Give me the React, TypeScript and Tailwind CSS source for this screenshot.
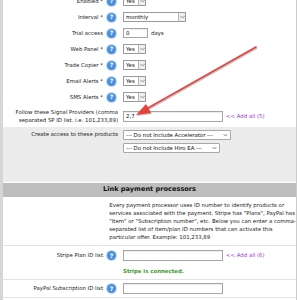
import React from "react";

const Help = () => (
  <span className="w-[9px] h-[9px] shrink-0 rounded-full bg-[#4a8fdc] ring-1 ring-[#c5dcf5] flex items-center justify-center text-white text-[6px] font-bold leading-none">
    ?
  </span>
);

const Chevron = ({ c = "#777" }: { c?: string }) => (
  <svg width="5" height="4" viewBox="0 0 5 4">
    <polyline points="0.5,1 2.5,3 4.5,1" fill="none" stroke={c} strokeWidth="0.8" />
  </svg>
);

const ClassicSelect = ({ value, w }: { value: string; w: string }) => (
  <div className={`h-[10px] ${w} border border-[#9a9a9a] bg-white flex items-stretch`}>
    <span className="flex-1 pl-[2px] leading-[8px] text-[5.4px] text-[#111]">{value}</span>
    <span className="w-[7px] border-l border-[#b8b8b8] bg-[#eeeeee] flex items-center justify-center">
      <Chevron />
    </span>
  </div>
);

const FlatSelect = ({ value, w }: { value: string; w: string }) => (
  <div className={`h-[10px] ${w} border border-[#a8a8a8] rounded-[1px] bg-white flex items-center justify-between px-[2px]`}>
    <span className="leading-[8px] text-[5.4px] text-[#111] whitespace-nowrap">{value}</span>
    <Chevron c="#666" />
  </div>
);

const Input = ({ value = "", w = "w-[100px]", h = "h-[11px]" }: { value?: string; w?: string; h?: string }) => (
  <div className={`${h} ${w} border border-[#a5a5a5] bg-white flex items-center px-[2px] text-[5.4px] text-[#111] shadow-[inset_0_1px_1px_rgba(0,0,0,0.08)]`}>
    {value}
  </div>
);

const Row = ({ label, children }: { label: string; children: React.ReactNode }) => (
  <div className="flex items-center h-[16px]">
    <div className="w-[120px] flex justify-end items-center gap-[4px] pr-[7px]">
      <span className="text-[5.4px] text-[#222] whitespace-nowrap">{label}</span>
      <Help />
    </div>
    <div className="flex items-center gap-[3px]">{children}</div>
  </div>
);

const AddAll = ({ n }: { n: number }) => (
  <span className="text-[5.4px] text-[#9a30d8] whitespace-nowrap">&lt;&lt; Add all ({n})</span>
);

export default function App() {
  return (
    <div className="w-[300px] h-[300px] overflow-hidden bg-white relative font-['DejaVu_Sans',sans-serif]">
      <div className="w-[297px] border-l-[3px] border-r border-l-[#d6d6d6] border-r-[#cccccc] -mt-[7px] h-[320px]">
        <Row label="Enabled *">
          <ClassicSelect value="Yes" w="w-[23px]" />
        </Row>
        <Row label="Interval *">
          <ClassicSelect value="monthly" w="w-[63px]" />
        </Row>
        <Row label="Trial access">
          <Input value="0" w="w-[25px]" h="h-[10px]" />
          <span className="text-[5.4px] text-[#222]">days</span>
        </Row>
        <Row label="Web Panel *">
          <ClassicSelect value="Yes" w="w-[23px]" />
        </Row>
        <Row label="Trade Copier *">
          <ClassicSelect value="Yes" w="w-[23px]" />
        </Row>
        <Row label="Email Alerts *">
          <ClassicSelect value="Yes" w="w-[23px]" />
        </Row>
        <Row label="SMS Alerts *">
          <ClassicSelect value="Yes" w="w-[23px]" />
        </Row>

        <div className="flex items-center h-[22px]">
          <div className="w-[120px] pr-[5px] text-right text-[5.4px] leading-[8px] text-[#222] whitespace-nowrap">
            Follow these Signal Providers (comma
            <br />
            separated SP ID list. i.e. 101,233,89)
          </div>
          <div className="flex items-center gap-[3px]">
            <Input value="2,7" />
            <AddAll n={5} />
          </div>
        </div>

        <div className="flex h-[55px] bg-[#ececec]">
          <div className="w-[120px] pr-[5px] pt-[3px] text-right text-[5.4px] leading-[8px] text-[#222] whitespace-nowrap">
            Create access to these products
          </div>
          <div className="flex flex-col gap-[3px] pt-[3px]">
            <FlatSelect value="--- Do not Include Accelerator ---" w="w-[108px]" />
            <FlatSelect value="--- Do not Include Hiro EA ---" w="w-[97px]" />
          </div>
        </div>

        <div className="mt-[1px] h-[14px] bg-[#bdbdbd] flex items-center justify-center">
          <span className="text-[6.6px] font-bold text-[#111]">Link payment processors</span>
        </div>

        <div className="flex border-b border-[#e3e3e3] pt-[4px] pb-[4px]">
          <div className="w-[120px]" />
          <div className="text-[5.4px] leading-[8px] text-[#222] whitespace-nowrap">
            Every payment processor uses ID number to identify products or
            <br />
            services associated with the payment. Stripe has "Plans", PayPal has
            <br />
            "Item" or "Subscription number", etc. Below you can enter a comma-
            <br />
            separated list of item/plan ID numbers that can activate this
            <br />
            particular offer. Example: 101,233,89
          </div>
        </div>

        <div className="flex border-b border-[#e3e3e3] pt-[4px] pb-[4px]">
          <div className="w-[120px] h-[11px] flex justify-end items-center gap-[4px] pr-[7px]">
            <span className="text-[5.4px] text-[#222] whitespace-nowrap">Stripe Plan ID list</span>
            <Help />
          </div>
          <div className="flex flex-col gap-[6px]">
            <div className="flex items-center gap-[3px]">
              <Input />
              <AddAll n={6} />
            </div>
            <span className="text-[5.4px] leading-[8px] font-bold text-[#3b9b27]">Stripe is connected.</span>
          </div>
        </div>

        <div className="flex border-b border-[#e3e3e3] pt-[3px] pb-[3px]">
          <div className="w-[120px] h-[11px] flex justify-end items-center gap-[4px] pr-[7px]">
            <span className="text-[5.4px] text-[#222] whitespace-nowrap">PayPal Subscription ID list</span>
            <Help />
          </div>
          <Input />
        </div>
      </div>

      <svg className="absolute left-0 top-0 pointer-events-none" width="300" height="300" viewBox="0 0 300 300">
        <g transform="translate(1,1)" opacity="0.35">
          <line x1="256" y1="47" x2="148" y2="108" stroke="#555" strokeWidth="1.6" />
          <polygon points="136,115 146,104 151,113" fill="#555" />
        </g>
        <line x1="256" y1="47" x2="148" y2="108" stroke="#e8403a" strokeWidth="1.6" strokeLinecap="round" />
        <polygon points="136,115 146,104 151,113" fill="#e8403a" />
      </svg>
    </div>
  );
}
